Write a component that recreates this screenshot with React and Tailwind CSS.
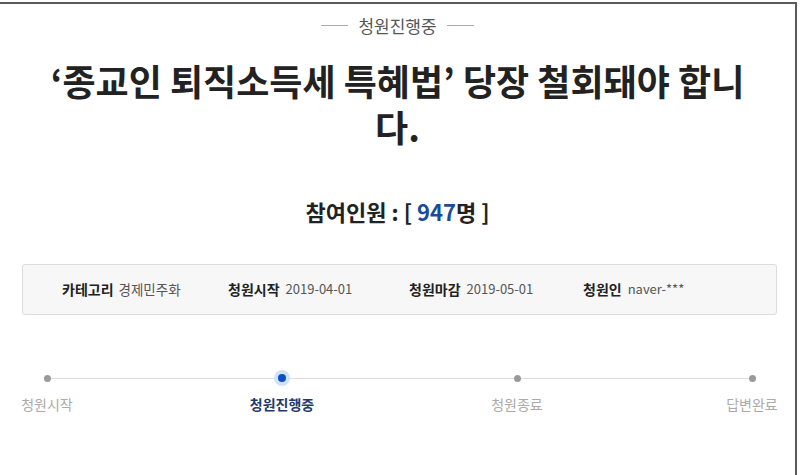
export default function App() {
  const steps = [
    { label: "청원시작", active: false },
    { label: "청원진행중", active: true },
    { label: "청원종료", active: false },
    { label: "답변완료", active: false },
  ];

  return (
    <div
      className="w-[800px] h-[475px] bg-white pt-[2px] pr-[3px] overflow-hidden"
      style={{ fontFamily: '"Noto Sans CJK KR", "Noto Sans", sans-serif' }}
    >
      <div className="h-full border-t-2 border-r-2 border-[#5a5a5a] flex flex-col">
        {/* status */}
        <div className="flex items-center justify-center gap-[10px] pt-[9px] text-[17px] text-[#555]">
          <span className="w-[27px] h-px bg-[#aaa]" />
          <span>청원진행중</span>
          <span className="w-[27px] h-px bg-[#aaa]" />
        </div>

        {/* title */}
        <h1 className="mx-auto mt-[18px] w-[720px] text-center text-[36px] leading-[46px] font-bold text-[#222]">
          ‘종교인 퇴직소득세 특혜법’ 당장 철회돼야 합니다.
        </h1>

        {/* count */}
        <div className="mt-[46px] text-center text-[22px] font-bold text-[#222]">
          참여인원 : [ <span className="text-[#1a4a9a]">947</span>명 ]
        </div>

        {/* info */}
        <div className="ml-[22px] mr-[18px] mt-[36px] h-[51px] rounded-[3px] border border-[#dcdcdc] bg-[#f7f7f7] flex items-center pl-[39px]">
          <div className="w-[166px] flex items-center gap-[5px]">
            <span className="text-[14px] font-bold text-[#222]">카테고리</span>
            <span className="text-[13.5px] text-[#555]">경제민주화</span>
          </div>
          <div className="w-[181px] flex items-center gap-[6px]">
            <span className="text-[14px] font-bold text-[#222]">청원시작</span>
            <span className="text-[13px] text-[#555]">2019-04-01</span>
          </div>
          <div className="w-[174px] flex items-center gap-[6px]">
            <span className="text-[14px] font-bold text-[#222]">청원마감</span>
            <span className="text-[13px] text-[#555]">2019-05-01</span>
          </div>
          <div className="flex items-center gap-[6px]">
            <span className="text-[14px] font-bold text-[#222]">청원인</span>
            <span className="text-[13px] text-[#555]">naver-***</span>
          </div>
        </div>

        {/* progress */}
        <div className="ml-[22px] mr-[18px] mt-[53px] relative">
          <div className="absolute left-[23px] right-[24px] top-[10px] h-px bg-[#ddd]" />
          <div className="flex justify-between relative">
            {steps.map((s, i) => (
              <div key={i} className="flex flex-col items-center w-[50px]">
                <div className="h-[21px] flex items-center justify-center">
                  {s.active ? (
                    <span className="w-[16px] h-[16px] rounded-full bg-[#cfe1fb] flex items-center justify-center">
                      <span className="w-[8px] h-[8px] rounded-full bg-[#0b50c2]" />
                    </span>
                  ) : (
                    <span className="w-[7px] h-[7px] rounded-full bg-[#9a9a9a]" />
                  )}
                </div>
                <span
                  className={
                    "mt-[5px] whitespace-nowrap text-[14px] " +
                    (s.active ? "font-bold text-[#1f3b6e]" : "text-[#aaa]")
                  }
                >
                  {s.label}
                </span>
              </div>
            ))}
          </div>
        </div>
      </div>
    </div>
  );
}
